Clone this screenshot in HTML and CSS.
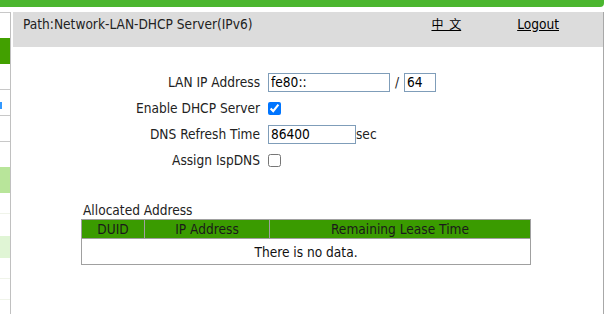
FILE: index.html
```html
<!DOCTYPE html>
<html lang="en">
  <head>
    <title>DHCP Server(IPv6)</title>
    <meta charset="UTF-8">
    <link rel="stylesheet" href="styles.css">
  </head>
  <body>

    <div class="topbar"></div>

    <div class="frame">

      <!-- left menu, mostly hidden -->
      <ul class="menu">
        <li class="m25"></li>
        <li class="m26 sel"></li>
        <li class="m25 line"></li>
        <li class="m25 line"><span class="mark"></span></li>
        <li class="m25 line"></li>
        <li class="m25"></li>
        <li class="m26 hover"></li>
        <li class="m20 faint"></li>
        <li class="m22"></li>
        <li class="m22 soft"></li>
        <li class="m20 faint"></li>
        <li class="m20 faint"></li>
      </ul>

      <div class="main">

        <div class="path">
          <span class="path-text">Path:Network-LAN-DHCP Server(IPv6)</span>
          <a href="#" class="lang">中&nbsp;文</a>
          <a href="#" class="logout">Logout</a>
        </div>

        <form class="dhcp">
          <label class="lbl">LAN IP Address</label>
          <div class="fld">
            <input type="text" class="ip" value="fe80::">
            <span class="slash">/</span>
            <input type="text" class="prefix" value="64">
          </div>

          <label class="lbl">Enable DHCP Server</label>
          <div class="fld"><input type="checkbox" class="chk" checked></div>

          <label class="lbl">DNS Refresh Time</label>
          <div class="fld"><input type="text" class="dns" value="86400">sec</div>

          <label class="lbl">Assign IspDNS</label>
          <div class="fld"><input type="checkbox" class="chk"></div>
        </form>

        <div class="alloc">
          <div class="alloc-title">Allocated Address</div>
          <table class="list">
            <tr>
              <th class="c1">DUID</th>
              <th class="c2">IP Address</th>
              <th class="c3">Remaining Lease Time</th>
            </tr>
            <tr>
              <td colspan="3">There is no data.</td>
            </tr>
          </table>
        </div>

      </div>
    </div>

  </body>
</html>
```

FILE: styles.css
```css
body {
  margin: 0;
  background: #FFFFFF;
  font-family: "DejaVu Sans Condensed", "DejaVu Sans", sans-serif;
  font-stretch: condensed;
  font-size: 13.6px;
  color: #222;
}

.topbar {
  width: 604px;
  height: 7px;
  background: #4bb62f;
  border-bottom-right-radius: 4px;
}

.frame {
  display: flex;
  margin-top: 5px;
  height: 302px;
}

/* menu */
.menu {
  list-style: none;
  margin: 0;
  padding: 0;
  width: 10px;
  border-top: 1px solid #c8c8c8;
  border-right: 1px solid #c0c0c0;
}

.menu li {
  position: relative;
}

.m20 { height: 20px; }
.m22 { height: 22px; }
.m25 { height: 25px; }
.m26 { height: 26px; }

.line {
  border-bottom: 1px solid #c8c8c8;
}

.faint {
  border-bottom: 1px solid #f0f4ea;
}

.sel {
  background: #42a000;
}

.hover {
  background: #b8e59a;
}

.soft {
  background: #e0f5d5;
}

.mark {
  position: absolute;
  left: 0;
  top: 12px;
  width: 2px;
  height: 7px;
  background: #3399ff;
}

/* main */
.main {
  margin-left: 2px;
  width: 590px;
  border-right: 1px solid #a8a8a8;
}

.path {
  display: flex;
  height: 35px;
  background: #dcdcdc;
  padding: 4px 0 0 10px;
  box-sizing: border-box;
  line-height: 16px;
  color: #222;
}

.path-text {
  flex: 1;
}

.path a {
  color: #000;
  text-decoration: underline;
}

.lang {
  font-family: "Noto Sans CJK SC", sans-serif;
  font-size: 12px;
  word-spacing: 3px;
  margin-right: 56px;
}

.logout {
  margin-right: 44px;
}

.dhcp {
  display: grid;
  grid-template-columns: 255px auto;
  grid-auto-rows: 26px;
  margin-top: 22px;
}

.lbl {
  text-align: right;
  padding-right: 8px;
  align-self: center;
}

.fld {
  display: flex;
  align-items: center;
}

.fld input[type=text] {
  height: 19px;
  box-sizing: border-box;
  border: 1px solid #7f9db9;
  padding: 0 2px;
  margin: 0;
  font-family: inherit;
  font-size: 13.6px;
  color: #000;
}

.ip {
  width: 122px;
}

.prefix {
  width: 32px;
}

.slash {
  width: 14px;
  text-align: center;
}

.dns {
  width: 88px;
}

.chk {
  width: 13px;
  height: 13px;
  margin: 1px 0 0 0;
}

.alloc {
  margin: 28px 0 0 68px;
}

.alloc-title {
  line-height: 18px;
  padding-left: 2px;
}

.list {
  width: 450px;
  border-collapse: collapse;
}

.list th,
.list td {
  border: 1px solid #a0a0a0;
  padding: 0;
  text-align: center;
  font-weight: normal;
}

.list th {
  background: #3a9b00;
  height: 18px;
  color: #1a1a1a;
}

.list td {
  height: 25px;
  color: #111;
}

.c1 { width: 62px; }
.c2 { width: 124px; }
```
